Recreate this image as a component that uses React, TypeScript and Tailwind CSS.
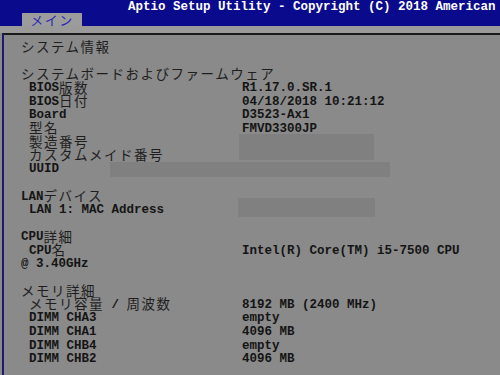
import type { ReactNode } from "react"

// japanese text sits a touch lower than the mono caps, so pad it up a bit
const J = ({ children }: { children: ReactNode }) => (
    <span className="mb-[3px] font-['Noto_Sans_CJK_JP',sans-serif] font-normal text-[13.5px] tracking-[1.5px] leading-[13.5px] text-[#1e1e1e]">{children}</span>
)

type Row = { kind: "head" | "item" | "blank" | "cont"; label?: ReactNode; value?: ReactNode }

const rows: Row[] = [
    { kind: "head", label: <J>システム情報</J> },
    { kind: "blank" },
    { kind: "head", label: <J>システムボードおよびファームウェア</J> },
    { kind: "item", label: <>BIOS<J>版数</J></>, value: "R1.17.0.SR.1" },
    { kind: "item", label: <>BIOS<J>日付</J></>, value: "04/18/2018 10:21:12" },
    { kind: "item", label: "Board", value: "D3523-Ax1" },
    { kind: "item", label: <J>型名</J>, value: "FMVD3300JP" },
    { kind: "item", label: <J>製造番号</J> },
    { kind: "item", label: <J>カスタムメイド番号</J> },
    { kind: "item", label: "UUID" },
    { kind: "blank" },
    { kind: "head", label: <>LAN<J>デバイス</J></> },
    { kind: "item", label: "LAN 1: MAC Address" },
    { kind: "blank" },
    { kind: "head", label: <>CPU<J>詳細</J></> },
    { kind: "item", label: <>CPU<J>名</J></>, value: "Intel(R) Core(TM) i5-7500 CPU" },
    { kind: "cont", label: "@ 3.40GHz" },
    { kind: "blank" },
    { kind: "head", label: <J>メモリ詳細</J> },
    { kind: "item", label: <><J>メモリ容量</J>{"\u00a0/\u00a0"}<J>周波数</J></>, value: "8192 MB (2400 MHz)" },
    { kind: "item", label: "DIMM CHA3", value: "empty" },
    { kind: "item", label: "DIMM CHA1", value: "4096 MB" },
    { kind: "item", label: "DIMM CHB4", value: "empty" },
    { kind: "item", label: "DIMM CHB2", value: "4096 MB" },
]

export default function App() {
    return (
        <div className="w-[500px] h-[375px] overflow-hidden flex flex-col bg-[#8a8a8a] font-['Liberation_Mono',monospace] font-bold text-[12.5px] text-[#141414]">
            {/* title bar */}
            <div className="h-[26px] bg-[#0a0a8c] flex flex-col shrink-0">
                <div className="h-[13px] pl-[128px] text-white whitespace-nowrap overflow-hidden leading-[14px]">
                    Aptio Setup Utility - Copyright (C) 2018 American
                </div>
                <div className="ml-[22px] w-[60px] h-[13px] bg-[#9c9c9c] flex items-center justify-center">
                    <span className="font-['Noto_Sans_CJK_JP',sans-serif] font-normal text-[13px] tracking-[1.5px] leading-[13px] text-[#2626b4]">メイン</span>
                </div>
            </div>
            <div className="h-[7px] bg-[#9a9a9a] shrink-0" />
            {/* main panel */}
            <div className="relative flex-1 ml-[2px] border-t-2 border-t-[#1a1a1a] border-l-2 border-l-[#1c1c6e] pt-[6.5px] pl-[17px]">
                {rows.map((r, i) => (
                    <div key={i} className="h-[13.55px] leading-[13.5px] flex whitespace-nowrap">
                        {r.kind === "item" ? (
                            <>
                                <div className="w-[221px] pl-[8px] flex items-center">{r.label}</div>
                                <div className="flex items-center">{r.value}</div>
                            </>
                        ) : (
                            <div className="flex items-center">{r.label}</div>
                        )}
                    </div>
                ))}
                {/* redacted fields, painted over the values */}
                <div className="absolute left-[235px] top-[99px] w-[135px] h-[26px] bg-[#808080]" />
                <div className="absolute left-[106px] top-[127px] w-[280px] h-[15px] bg-[#808080]" />
                <div className="absolute left-[234px] top-[163px] w-[137px] h-[19px] bg-[#808080]" />
            </div>
        </div>
    )
}
